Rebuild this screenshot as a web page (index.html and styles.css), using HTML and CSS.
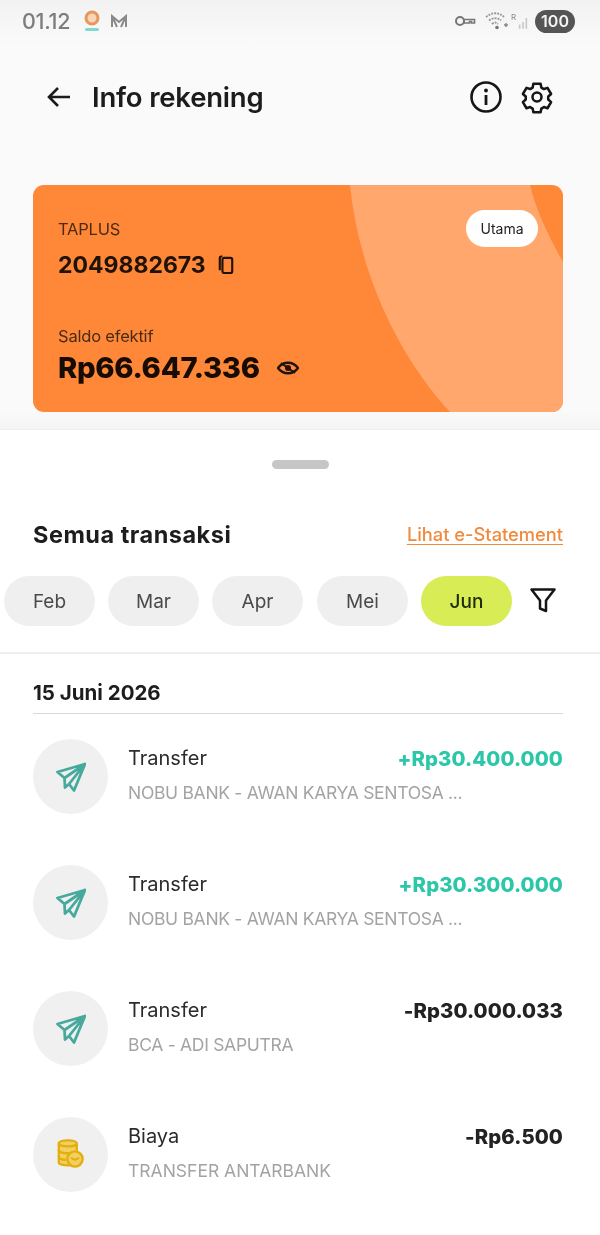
FILE: index.html
```html
<!DOCTYPE html>
<html lang="id">
<head>
<meta charset="utf-8">
<title>Info rekening</title>
<link rel="stylesheet" href="styles.css">
</head>
<body>
<div class="page">
  <section class="top">
    <div class="status">
      <div class="status-left">
        <span class="time">01.12</span>
        <svg class="st-app" viewBox="0 0 20 24" width="20" height="24"><circle cx="10" cy="9" r="6" fill="#f6d5b8" stroke="#e8965a" stroke-width="3"/><rect x="3" y="19" width="14" height="3" rx="1.5" fill="#7fd8cc"/></svg>
        <svg class="st-mail" viewBox="0 0 18 14" width="18" height="14"><path d="M2 13V2l7 6 7-6v11M2 2l5 11M16 2l-5 11" fill="none" stroke="#8a8a8a" stroke-width="2"/></svg>
      </div>
      <div class="status-right">
        <svg viewBox="0 0 22 12" width="22" height="12"><circle cx="6" cy="6" r="4" fill="none" stroke="#777" stroke-width="2"/><path d="M10 4.500h10.500v3.500h-3v-1.500h-2v1.500h-5.500z" fill="none" stroke="#777" stroke-width="1.600"/></svg>
        <svg viewBox="0 0 24 18" width="24" height="18"><path d="M1 5c6-5 13-5 18 0M4 8.500c4-3 9-3 12 0M7 12c2-2 4-2 6 0" fill="none" stroke="#999" stroke-width="1.800" stroke-dasharray="2 1"/><circle cx="12" cy="15.500" r="1.800" fill="#777"/><path d="M19 13h4M21 11v4" stroke="#888" stroke-width="1.400"/></svg>
        <span class="sig"><i class="r">R</i><svg viewBox="0 0 12 15" width="12" height="15"><path d="M1 15v-5h2v5zM5 15V7h2v8zM9 15V2h2v13z" fill="#c9c9c9"/></svg></span>
        <span class="batt">100</span>
      </div>
    </div>

    <header class="bar">
      <svg class="back" viewBox="0 0 26 24" width="26" height="24"><path d="M24 12H3M12 3l-9 9 9 9" fill="none" stroke="#1c1c1c" stroke-width="2.600"/></svg>
      <h1 class="title">Info rekening</h1>
      <div class="bar-icons">
        <svg viewBox="0 0 34 34" width="34" height="34"><circle cx="17" cy="17" r="14.500" fill="none" stroke="#161616" stroke-width="2.600"/><path d="M17 15v10" stroke="#161616" stroke-width="2.800"/><circle cx="17" cy="10.500" r="1.900" fill="#161616"/></svg>
        <svg viewBox="0 0 24 24" width="36" height="36"><path d="M9.600 3.200h4.800l.5 2.500 1.700 1 2.400-.8 2.400 4.100-1.900 1.700v2l1.900 1.700-2.400 4.100-2.400-.8-1.700 1-.5 2.500H9.600l-.5-2.500-1.700-1-2.400.8-2.400-4.100 1.900-1.700v-2L2.600 10l2.400-4.100 2.400.8 1.700-1z" fill="none" stroke="#161616" stroke-width="1.700" stroke-linejoin="round"/><circle cx="12" cy="12" r="3" fill="none" stroke="#161616" stroke-width="1.700"/></svg>
      </div>
    </header>

    <div class="card">
      <svg class="card-art" viewBox="0 0 530 227" preserveAspectRatio="none"><path d="M317 0C325 80 360 165 417 227H530V77C515 50 503 25 497 0Z" fill="#ffa76d"/></svg>
      <div class="card-head">
        <div>
          <div class="label">TAPLUS</div>
          <div class="acct">
            <span>2049882673</span>
            <svg viewBox="0 0 18 22" width="16" height="20"><rect x="5" y="3" width="11" height="17" rx="2" fill="none" stroke="#1f1208" stroke-width="2.400"/><path d="M5 1.500h-1.500a1.500 1.500 0 0 0-1.500 1.500v14" fill="none" stroke="#1f1208" stroke-width="2.400"/></svg>
          </div>
        </div>
        <span class="pill">Utama</span>
      </div>
      <div class="label saldo">Saldo efektif</div>
      <div class="balance">
        <span>Rp66.647.336</span>
        <svg viewBox="0 0 22 14" width="22" height="14"><path d="M1 7c5-7 15-7 20 0-5 7-15 7-20 0z" fill="none" stroke="#1f1208" stroke-width="2.400"/><circle cx="11" cy="7" r="3" fill="#1f1208"/><path d="M4 2l14 10" stroke="#1f1208" stroke-width="2"/></svg>
      </div>
    </div>
  </section>

  <section class="sheet">
    <div class="handle"></div>
    <div class="sheet-head">
      <h2 class="sheet-title">Semua transaksi</h2>
      <a class="link">Lihat e-Statement</a>
    </div>
    <div class="chips">
      <span class="chip">Feb</span>
      <span class="chip">Mar</span>
      <span class="chip">Apr</span>
      <span class="chip chip-shift">Mei</span>
      <span class="chip chip-on">Jun</span>
      <svg class="filter" viewBox="0 0 28 28" width="28" height="28"><path d="M2.500 3.500h23L17 14.500V25l-6-2.500v-8z" fill="none" stroke="#151515" stroke-width="2.500" stroke-linejoin="round"/></svg>
    </div>
    <div class="day-wrap">
      <div class="day">15 Juni 2026</div>
      <div class="tx">
        <div class="tx-ico"><svg viewBox="0 0 30 30" width="30" height="30"><path d="M1.500 10 29 2 18 28.500l-5-6.500-4 3.500-.5-9.500zM8.500 16 29 2 13 22" fill="none" stroke="#47a99c" stroke-width="2.800" stroke-linejoin="round"/></svg></div>
        <div class="tx-body">
          <div class="tx-row"><span class="tx-name">Transfer</span><span class="amt plus">+Rp30.400.000</span></div>
          <div class="tx-sub">NOBU BANK - AWAN KARYA SENTOSA ...</div>
        </div>
      </div>
      <div class="tx">
        <div class="tx-ico"><svg viewBox="0 0 30 30" width="30" height="30"><path d="M1.500 10 29 2 18 28.500l-5-6.500-4 3.500-.5-9.500zM8.500 16 29 2 13 22" fill="none" stroke="#47a99c" stroke-width="2.800" stroke-linejoin="round"/></svg></div>
        <div class="tx-body">
          <div class="tx-row"><span class="tx-name">Transfer</span><span class="amt plus">+Rp30.300.000</span></div>
          <div class="tx-sub">NOBU BANK - AWAN KARYA SENTOSA ...</div>
        </div>
      </div>
      <div class="tx">
        <div class="tx-ico"><svg viewBox="0 0 30 30" width="30" height="30"><path d="M1.500 10 29 2 18 28.500l-5-6.500-4 3.500-.5-9.500zM8.500 16 29 2 13 22" fill="none" stroke="#47a99c" stroke-width="2.800" stroke-linejoin="round"/></svg></div>
        <div class="tx-body">
          <div class="tx-row"><span class="tx-name">Transfer</span><span class="amt">-Rp30.000.033</span></div>
          <div class="tx-sub">BCA - ADI SAPUTRA</div>
        </div>
      </div>
      <div class="tx">
        <div class="tx-ico"><svg viewBox="0 0 30 34" width="27" height="31"><path d="M2 5c0-5 20-5 20 0v21c0 4-20 4-20 0z" fill="#f2cf5e" stroke="#e3ae10" stroke-width="2.600"/><path d="M2 5c0 4 20 4 20 0M2 12c0 4 12 4 14 3M2 19c0 3 5 4 8 4" fill="none" stroke="#e3ae10" stroke-width="2.600"/><circle cx="20" cy="22" r="8.500" fill="#f2cf5e" stroke="#e3ae10" stroke-width="2.600"/><path d="M15.500 20.500c3 3 6 3 9 0" fill="none" stroke="#e3ae10" stroke-width="2.200"/></svg></div>
        <div class="tx-body">
          <div class="tx-row"><span class="tx-name">Biaya</span><span class="amt">-Rp6.500</span></div>
          <div class="tx-sub wide">TRANSFER ANTARBANK</div>
        </div>
      </div>
    </div>
  </section>
</div>
</body>
</html>
```

FILE: styles.css
```css
* { box-sizing: border-box; }
html, body { margin: 0; padding: 0; background: #fff; }
body { font-family: Inter, "Liberation Sans", sans-serif; color: #1a1a1a; }
.page { width: 600px; height: 1235px; overflow: hidden; filter: blur(0.7px); }

.top { height: 429px; background: linear-gradient(#f2f2f2 0, #fafafa 45px, #fafafa 410px, #f4f4f4 429px); padding-top: 8px; }
.status { height: 26px; padding: 0 25px 0 22px; display: flex; justify-content: space-between; align-items: center; }
.status-left, .status-right { display: flex; align-items: center; }
.time { font-size: 21.500px; color: #7d7d7d; font-weight: 500; letter-spacing: -0.3px; }
.st-app { margin-left: 12px; }
.st-mail { margin-left: 8px; }
.status-right { gap: 5px; }
.status-right > svg:first-child { margin-right: 4px; }
.sig { display: flex; align-items: flex-end; position: relative; width: 14px; height: 18px; }
.r { font-size: 8px; font-style: normal; color: #888; position: absolute; left: -3px; top: 0; }
.sig svg { margin-left: 4px; }
.batt { width: 40px; height: 23px; border-radius: 12px; background: #555; color: #f4f4f4; font-size: 16px; font-weight: 600; display: flex; align-items: center; justify-content: center; margin-left: 2px; }

.bar { height: 62px; margin-top: 32px; padding: 0 45px 0 46px; display: flex; align-items: center; }
.back { flex: none; }
.title { margin: 0 0 0 20px; font-size: 27.500px; font-weight: 600; letter-spacing: -0.2px; color: #1c1c1c; flex: 1; }
.bar-icons { display: flex; align-items: center; gap: 16px; }

.card { position: relative; overflow: hidden; margin: 57px 37px 0 33px; height: 227px; background: #ff8838; border-radius: 11px; padding: 34px 25px 0; color: #1f1208; }
.card-art { position: absolute; inset: 0; width: 100%; height: 100%; }
.card-head, .saldo, .balance { position: relative; }
.card-head { display: flex; justify-content: space-between; align-items: flex-start; }
.label { font-size: 16.500px; line-height: 20px; color: #4a2a12; letter-spacing: -0.2px; }
.acct { display: flex; align-items: center; gap: 12px; margin-top: 12px; font-size: 23px; line-height: 28px; font-weight: 700; }
.pill { background: #fff; color: #222; border-radius: 19px; width: 72px; height: 37px; display: flex; align-items: center; justify-content: center; font-size: 14px; margin-top: -9px; }
.saldo { margin-top: 47px; }
.balance { display: flex; align-items: center; gap: 17px; margin-top: 4px; font-size: 29.200px; line-height: 36px; font-weight: 800; letter-spacing: -0.3px; color: #170c04; }

.sheet { height: 806px; background: #fff; border-top: 1px solid #efefef; }
.handle { width: 57px; height: 9px; border-radius: 5px; background: #c6c6c6; margin: 30px auto 0; }
.sheet-head { display: flex; justify-content: space-between; align-items: center; margin-top: 50px; padding: 0 37px 0 33px; height: 30px; }
.sheet-title { margin: 0; font-size: 23.500px; font-weight: 700; color: #1d1d1d; letter-spacing: 0.5px; }
.link { font-size: 18.300px; color: #f08a3c; text-decoration: underline; text-underline-offset: 3px; font-weight: 500; }
.chips { display: flex; align-items: center; gap: 13px; padding-left: 4px; margin-top: 27px; padding-bottom: 26px; border-bottom: 2px solid #eeeeee; }
.chip { width: 91px; height: 50px; border-radius: 25px; background: #efefef; color: #4a4a4a; font-size: 19px; display: flex; align-items: center; justify-content: center; }
.chip-shift { margin-left: 1px; }
.chip-on { background: #d7ec55; color: #1f2a08; font-weight: 500; }
.filter { margin-left: 4px; margin-top: -3px; }

.day-wrap { padding: 0 37px 0 33px; }
.day { height: 60px; padding-top: 27px; font-size: 20.500px; line-height: 24px; font-weight: 700; color: #1d1d1d; border-bottom: 1.500px solid #d9d9d9; }
.tx { display: flex; height: 126px; padding-top: 25px; gap: 20px; }
.tx-ico { flex: none; width: 75px; height: 75px; border-radius: 50%; background: #f0f0f0; display: flex; align-items: center; justify-content: center; }
.tx-body { flex: 1; padding-top: 7px; min-width: 0; }
.tx-row { display: flex; justify-content: space-between; align-items: center; height: 24px; }
.tx-name { font-size: 20px; color: #2b2b2b; }
.amt { font-size: 20.300px; font-weight: 800; color: #222; letter-spacing: 0.1px; }
.plus { color: #2cc7a8; }
.tx-sub { margin-top: 12px; font-size: 17.500px; line-height: 22px; color: #a3a3a3; letter-spacing: -0.3px; }
.tx-sub.wide { letter-spacing: 0; }
```
